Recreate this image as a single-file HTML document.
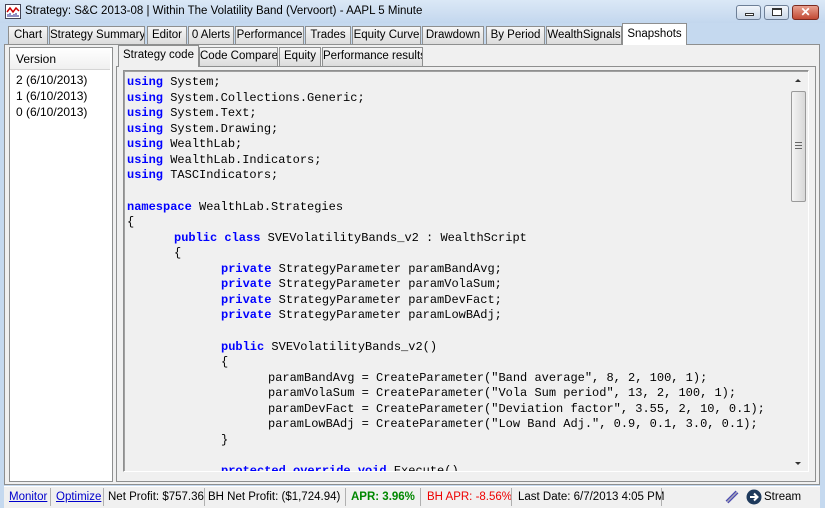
<!DOCTYPE html>
<html><head><style>
*{margin:0;padding:0;box-sizing:border-box}
body{width:825px;height:508px;overflow:hidden;background:#c5d9ef;font-family:"Liberation Sans",sans-serif;font-size:11.5px;color:#000;position:relative}
.abs{position:absolute}
.title{left:0;top:0;width:825px;height:23px;background:linear-gradient(#dbe8f6,#c3d7ee)}
.tab{position:absolute;top:26px;height:18px;background:linear-gradient(#f6f6f6,#dcdcdc);border:1px solid #8e8f8f;border-bottom:none;text-align:center;line-height:16px;font-size:11.5px;white-space:nowrap;overflow:hidden}
.tab.act{top:23px;height:22px;background:#fff;line-height:20px;z-index:2}
.itab{position:absolute;top:47px;height:19px;background:linear-gradient(#f6f6f6,#dcdcdc);border:1px solid #8e8f8f;border-bottom:none;text-align:center;line-height:17px;white-space:nowrap;overflow:hidden}
.itab.act{top:45px;height:22px;background:#f0f0f0;line-height:19px;z-index:2}
pre{font-family:"Liberation Mono",monospace;font-size:12px;line-height:15.56px;tab-size:47px;-moz-tab-size:47px}
b{color:#0000ff}
.btn{position:absolute;top:5px;height:15px;border:1px solid #6d7f97;border-radius:3px;background:linear-gradient(#f2f6fb,#c9d7e9)}
.st{position:absolute;top:489px;height:16px;line-height:16px;font-size:11.5px;white-space:nowrap}
.sep{position:absolute;top:488px;height:18px;width:1px;background:#b0b0b0}
</style></head><body>
<div class="abs title"></div>
<svg class="abs" style="left:5px;top:4px" width="16" height="15"><rect x="0.5" y="0.5" width="15" height="14" fill="#fff" stroke="#445"/><path d="M2 8 L5 4 L8 8 L11 4 L14 7" stroke="#c00" fill="none" stroke-width="1.5"/><path d="M3 13V10M5 13V9M7 13V11M9 13V10M11 13V9M13 13V11" stroke="#228" /></svg>
<div class="abs" style="left:25px;top:5px;font-size:11.5px">Strategy: S&amp;C 2013-08 | Within The Volatility Band (Vervoort) - AAPL 5 Minute</div>
<div class="btn" style="left:736px;width:25px"><div class="abs" style="left:8px;top:7px;width:9px;height:3px;border:1px solid #333;background:#fff"></div></div>
<div class="btn" style="left:764px;width:25px"><div class="abs" style="left:7px;top:2px;width:10px;height:8px;border:1px solid #333;border-top-width:2px;background:#fff"></div></div>
<div class="btn" style="left:792px;width:27px;background:linear-gradient(#e8a08f,#c24a35);border-color:#7a2a20;color:#fff;font-weight:bold;text-align:center;line-height:13px;font-size:12px">✕</div>

<div class="abs" style="left:4px;top:44px;width:816px;height:441px;background:#f0f0f0;border:1px solid #8e8f8f"></div>
<div class="tab" style="left:8px;width:40px">Chart</div>
<div class="tab" style="left:49px;width:96px">Strategy Summary</div>
<div class="tab" style="left:147px;width:40px">Editor</div>
<div class="tab" style="left:188px;width:46px">0 Alerts</div>
<div class="tab" style="left:235px;width:69px">Performance</div>
<div class="tab" style="left:305px;width:46px">Trades</div>
<div class="tab" style="left:352px;width:69px">Equity Curve</div>
<div class="tab" style="left:422px;width:62px">Drawdown</div>
<div class="tab" style="left:486px;width:59px">By Period</div>
<div class="tab" style="left:546px;width:76px">WealthSignals</div>
<div class="tab act" style="left:622px;width:65px">Snapshots</div>

<div class="abs" style="left:9px;top:47px;width:104px;height:435px;background:#fff;border:1px solid #8e8f8f"></div>
<div class="abs" style="left:10px;top:48px;width:100px;height:22px;background:linear-gradient(#fff,#f0f0f0);border-bottom:1px solid #d5d5d5;padding-left:6px;line-height:22px;font-size:12px">Version</div>
<div class="abs" style="left:16px;top:72px;line-height:16px;font-size:12px">2 (6/10/2013)<br>1 (6/10/2013)<br>0 (6/10/2013)</div>

<div class="abs" style="left:116px;top:66px;width:700px;height:416px;border:1px solid #8e8f8f;background:#f0f0f0"></div>
<div class="itab act" style="left:118px;width:81px">Strategy code</div>
<div class="itab" style="left:199px;width:79px">Code Compare</div>
<div class="itab" style="left:279px;width:42px">Equity</div>
<div class="itab" style="left:322px;width:101px">Performance results</div>

<div class="abs" style="left:123px;top:70px;width:686px;height:402px;border:1px solid #8e8f8f;border-right-color:#fff;border-bottom-color:#fff;box-shadow:inset 1px 1px 0 #a0a0a0;background:#f0f0f0;overflow:hidden">
<pre class="abs" style="left:3px;top:4px">
<b>using</b> System;
<b>using</b> System.Collections.Generic;
<b>using</b> System.Text;
<b>using</b> System.Drawing;
<b>using</b> WealthLab;
<b>using</b> WealthLab.Indicators;
<b>using</b> TASCIndicators;

<b>namespace</b> WealthLab.Strategies
{
	<b>public class</b> SVEVolatilityBands_v2 : WealthScript
	{
		<b>private</b> StrategyParameter paramBandAvg;
		<b>private</b> StrategyParameter paramVolaSum;
		<b>private</b> StrategyParameter paramDevFact;
		<b>private</b> StrategyParameter paramLowBAdj;

		<b>public</b> SVEVolatilityBands_v2()
		{
			paramBandAvg = CreateParameter("Band average", 8, 2, 100, 1);
			paramVolaSum = CreateParameter("Vola Sum period", 13, 2, 100, 1);
			paramDevFact = CreateParameter("Deviation factor", 3.55, 2, 10, 0.1);
			paramLowBAdj = CreateParameter("Low Band Adj.", 0.9, 0.1, 3.0, 0.1);
		}

		<b>protected override void</b> Execute()
</pre>
<div class="abs" style="left:666px;top:1px;width:17px;height:400px;background:#f0f0f0">
<div class="abs" style="left:5px;top:7px;width:0;height:0;border:3px solid transparent;border-bottom:3px solid #333;border-top:none"></div>
<div class="abs" style="left:1px;top:19px;width:15px;height:111px;border:1px solid #9a9a9a;border-radius:2px;background:linear-gradient(90deg,#f4f4f4,#d8d8d8)"></div>
<div class="abs" style="left:5px;top:70px;width:7px;height:7px;border-top:1px solid #666;border-bottom:1px solid #666"><div style="margin-top:2px;border-top:1px solid #666"></div></div>
<div class="abs" style="left:5px;top:390px;width:0;height:0;border:3px solid transparent;border-top:3px solid #333;border-bottom:none"></div>
</div>
</div>

<div class="abs" style="left:4px;top:486px;width:816px;height:22px;background:#f0f0f0;border-top:1px solid #fff"></div>
<div class="st" style="left:9px;color:#00c;text-decoration:underline">Monitor</div>
<div class="sep" style="left:50px"></div>
<div class="st" style="left:56px;color:#00c;text-decoration:underline">Optimize</div>
<div class="sep" style="left:103px"></div>
<div class="st" style="left:108px">Net Profit: $757.36</div>
<div class="sep" style="left:204px"></div>
<div class="st" style="left:208px">BH Net Profit: ($1,724.94)</div>
<div class="sep" style="left:345px"></div>
<div class="st" style="left:351px;color:#080;font-weight:bold">APR: 3.96%</div>
<div class="sep" style="left:420px"></div>
<div class="st" style="left:427px;color:#e00">BH APR: -8.56%</div>
<div class="sep" style="left:511px"></div>
<div class="st" style="left:518px">Last Date: 6/7/2013 4:05 PM</div>
<div class="sep" style="left:661px"></div>
<svg class="abs" style="left:724px;top:489px" width="16" height="16"><path d="M3 13 L13 3" stroke="#4a4ab0" stroke-width="4"/><path d="M3 13 L13 3" stroke="#aab" stroke-width="1.5"/></svg>
<svg class="abs" style="left:746px;top:489px" width="16" height="16"><circle cx="8" cy="8" r="7.5" fill="#1e3a5c"/><path d="M4 8H11M8 4.5L11.5 8L8 11.5" stroke="#fff" stroke-width="2" fill="none"/></svg>
<div class="abs st" style="left:764px">Stream</div>
</body></html>
